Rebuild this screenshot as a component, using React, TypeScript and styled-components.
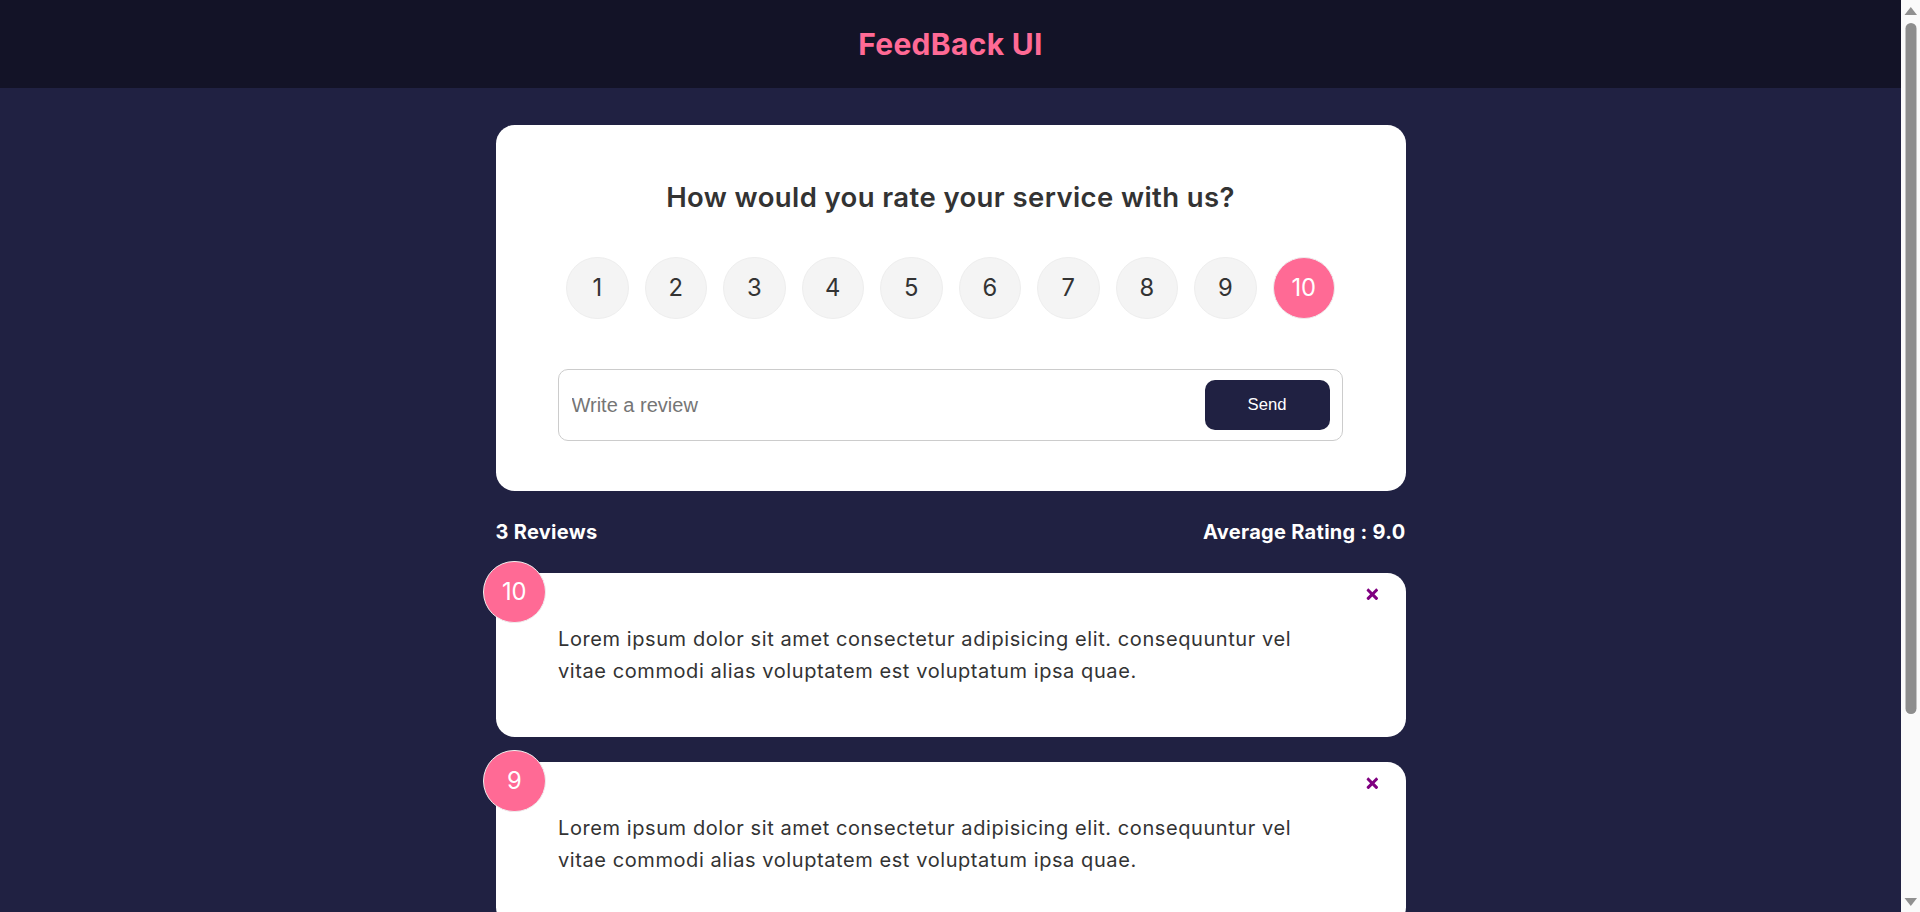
import React, { useState } from "react";
import styled, { createGlobalStyle } from "styled-components";
import { FaTimes } from "react-icons/fa";

const GlobalStyle = createGlobalStyle`
  * { box-sizing: border-box; margin: 0; padding: 0; }
  html::-webkit-scrollbar { display: none; }
  body {
    font-family: Inter, "Open Sans", sans-serif;
    background-color: #202142;
    color: #fff;
    line-height: 1.6;
    padding-right: 19px;
  }
  ul { list-style: none; }
`;

const ScrollbarSvg = styled.svg`
  position: fixed;
  top: 0;
  right: 0;
  width: 19px;
  height: 912px;
  display: block;
`;

const Header = styled.header`
  height: 87.5px;
  display: flex;
  align-items: center;
  justify-content: center;
  background-color: rgba(0, 0, 0, 0.4);
`;

const Title = styled.h2`
  color: #ff6a95;
  font-size: 30px;
  font-weight: 700;
  letter-spacing: 0.3px;
`;

const Container = styled.div`
  max-width: 960px;
  margin: 0 auto;
  padding: 12.5px 25px 0;
`;

const Card = styled.div`
  background-color: #fff;
  color: #333;
  border-radius: 18.75px;
  padding: 50px 62.5px;
  margin: 25px 0;
  position: relative;
`;

const Question = styled.h2`
  font-size: 27.5px;
  font-weight: 600;
  text-align: center;
  letter-spacing: 0.4px;
`;

const RatingList = styled.ul`
  display: flex;
  align-items: center;
  justify-content: space-around;
  margin: 37.5px 0 50px;
`;

const RatingItem = styled.li<{ $selected: boolean }>`
  width: 62.5px;
  height: 62.5px;
  border-radius: 50%;
  border: 1.25px solid #eee;
  background: ${(p) => (p.$selected ? "#ff6a95" : "#f4f4f4")};
  color: ${(p) => (p.$selected ? "#fff" : "#333")};
  font-size: 23.75px;
  display: flex;
  align-items: center;
  justify-content: center;
  cursor: pointer;
`;

const InputGroup = styled.div`
  display: flex;
  align-items: center;
  border: 1.25px solid #ccc;
  padding: 10px 12.5px;
  border-radius: 10px;
`;

const Input = styled.input`
  flex-grow: 2;
  border: none;
  font-size: 20px;
  font-family: "Liberation Sans", Arial, sans-serif;
  color: #333;
  &:focus { outline: none; }
  &::placeholder { color: #757575; }
`;

const SendButton = styled.button`
  width: 125px;
  height: 50px;
  border: 0;
  border-radius: 10px;
  background-color: #202142;
  color: #fff;
  font-family: "Liberation Sans", Arial, sans-serif;
  font-size: 16.67px;
  cursor: pointer;
`;

const Stats = styled.div`
  display: flex;
  justify-content: space-between;
  align-items: center;
`;

const StatText = styled.h4`
  font-size: 20px;
  font-weight: 700;
  letter-spacing: 0.3px;
`;

const NumDisplay = styled.div`
  position: absolute;
  top: -12.5px;
  left: -12.5px;
  width: 62.5px;
  height: 62.5px;
  background: #ff6a95;
  color: #fff;
  border: 1.25px solid #eee;
  border-radius: 50%;
  display: flex;
  align-items: center;
  justify-content: center;
  font-size: 23.75px;
`;

const CloseButton = styled.button`
  position: absolute;
  top: 12.5px;
  right: 25px;
  background: none;
  border: none;
  cursor: pointer;
  display: flex;
  font-size: 16.67px;
`;

const ReviewText = styled.div`
  font-size: 20px;
  letter-spacing: 0.58px;
`;

const reviews = [
  { id: 1, rating: 10, text: "Lorem ipsum dolor sit amet consectetur adipisicing elit. consequuntur vel vitae commodi alias voluptatem est voluptatum ipsa quae." },
  { id: 2, rating: 9, text: "Lorem ipsum dolor sit amet consectetur adipisicing elit. consequuntur vel vitae commodi alias voluptatem est voluptatum ipsa quae." },
  { id: 3, rating: 8, text: "Lorem ipsum dolor sit amet consectetur adipisicing elit. consequuntur vel vitae commodi alias voluptatem est voluptatum ipsa quae." },
];

function Scrollbar() {
  return (
    <ScrollbarSvg viewBox="0 0 19 912" aria-hidden="true">
      <rect x="0" y="0" width="19" height="912" fill="#fafafa" />
      <polygon points="3.5,15 9.8,7 16,15" fill="#909090" />
      <rect x="4.5" y="23" width="11" height="691" rx="5.5" fill="#8d8d8d" />
      <polygon points="3.5,898 16,898 9.8,906" fill="#909090" />
    </ScrollbarSvg>
  );
}

export default function App() {
  const [selected, setSelected] = useState(10);
  const avg = (reviews.reduce((a, r) => a + r.rating, 0) / reviews.length).toFixed(1);
  return (
    <>
      <GlobalStyle />
      <Header>
        <Title>FeedBack UI</Title>
      </Header>
      <Container>
        <Card>
          <Question>How would you rate your service with us?</Question>
          <RatingList>
            {Array.from({ length: 10 }, (_, i) => i + 1).map((n) => (
              <RatingItem key={n} $selected={n === selected} onClick={() => setSelected(n)}>
                {n}
              </RatingItem>
            ))}
          </RatingList>
          <InputGroup>
            <Input type="text" placeholder="Write a review" />
            <SendButton type="submit">Send</SendButton>
          </InputGroup>
        </Card>
        <Stats>
          <StatText>{reviews.length} Reviews</StatText>
          <StatText>Average Rating : {avg}</StatText>
        </Stats>
        {reviews.map((r) => (
          <Card key={r.id}>
            <NumDisplay>{r.rating}</NumDisplay>
            <CloseButton>
              <FaTimes color="purple" />
            </CloseButton>
            <ReviewText>{r.text}</ReviewText>
          </Card>
        ))}
      </Container>
      <Scrollbar />
    </>
  );
}
